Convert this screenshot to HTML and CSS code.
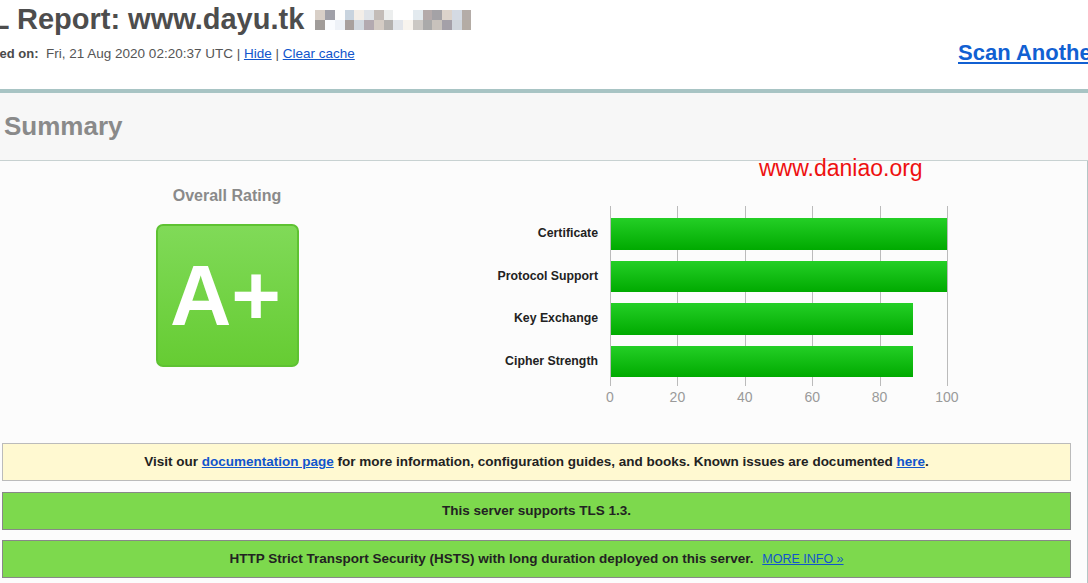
FILE: index.html
```html
<!DOCTYPE html>
<html>
<head>
<meta charset="utf-8">
<link rel="stylesheet" href="styles.css">
</head>
<body>
<div class="report-head">
  <h1 class="title">SSL Report: www.dayu.tk <span class="pix"><span class="pix-grid">
    <i style="background:#d8cfc7"></i><i style="background:#a0a0a8"></i><i style="background:#fdfdfd"></i><i style="background:#c8d3de"></i><i style="background:#f3eee8"></i><i style="background:#dfe3e8"></i><i style="background:#c3bcb8"></i><i style="background:#eceeee"></i><i style="background:#ffffff"></i><i style="background:#ffffff"></i><i style="background:#e3eaef"></i><i style="background:#b4aaaa"></i><i style="background:#a4a2a6"></i><i style="background:#dcd3cb"></i><i style="background:#d4dae3"></i><i style="background:#b4aca8"></i>
    <i style="background:#a09c9a"></i><i style="background:#fafcff"></i><i style="background:#eef2f8"></i><i style="background:#a8a09e"></i><i style="background:#d2d8e0"></i><i style="background:#b3a9b0"></i><i style="background:#d4cbc4"></i><i style="background:#b4b1af"></i><i style="background:#e2e5ea"></i><i style="background:#f8f4ee"></i><i style="background:#cbc8c4"></i><i style="background:#aaaaaa"></i><i style="background:#c8c2bc"></i><i style="background:#a4a0a8"></i><i style="background:#d0d6dc"></i><i style="background:#b4aca4"></i>
  </span></span></h1>
  <div class="meta-row">
    <div class="assessed"><b>Assessed on:</b>&nbsp;&nbsp;Fri, 21 Aug 2020 02:20:37 UTC | <a href="#">Hide</a> | <a href="#">Clear cache</a></div>
    <a class="scan" href="#">Scan Another &raquo;</a>
  </div>
</div>
<div class="rule"></div>
<section class="summary">
  <div class="sum-head">Summary</div>
  <div class="sum-body">
    <div class="watermark">www.daniao.org</div>
    <div class="rating-row">
      <div class="rating">
        <div class="rating-title">Overall Rating</div>
        <div class="grade">A+</div>
      </div>
      <div class="chart">
        <div class="chart-main">
          <div class="labels">
            <div class="label">Certificate</div>
            <div class="label">Protocol Support</div>
            <div class="label">Key Exchange</div>
            <div class="label">Cipher Strength</div>
          </div>
          <div class="plot">
            <div class="gridlines"><span></span><span></span><span></span><span></span><span></span></div>
            <div class="bar" style="width:100%"></div>
            <div class="bar" style="width:100%"></div>
            <div class="bar" style="width:90%"></div>
            <div class="bar" style="width:90%"></div>
          </div>
        </div>
        <div class="axis"><span>0</span><span>20</span><span>40</span><span>60</span><span>80</span><span>100</span></div>
      </div>
    </div>
    <div class="notes">
      <div class="note note-info">Visit our <a href="#">documentation page</a> for more information, configuration guides, and books. Known issues are documented <a href="#">here</a>.</div>
      <div class="note note-good">This server supports TLS 1.3.</div>
      <div class="note note-good">HTTP Strict Transport Security (HSTS) with long duration deployed on this server. <a class="more" href="#">MORE INFO &raquo;</a></div>
    </div>
  </div>
</section>
</body>
</html>
```

FILE: styles.css
```css
html, body {
  margin: 0;
  padding: 0;
}
body {
  width: 1088px;
  height: 583px;
  overflow: hidden;
  background: #ffffff;
  font-family: "Liberation Sans", Arial, sans-serif;
  color: #222;
}
a {
  color: #1155cc;
}

.report-head {
  margin-left: -47px;
  width: 1200px;
  height: 89px;
}
.title {
  margin: 0;
  padding-top: 2px;
  font-size: 29px;
  line-height: 34px;
  font-weight: bold;
  color: #4d4d4d;
  white-space: nowrap;
}
.pix {
  display: inline-block;
  overflow: hidden;
  width: 156px;
  height: 20px;
  margin-left: 3px;
  vertical-align: -1px;
}
.pix-grid {
  display: grid;
  grid-template-columns: repeat(16, 1fr);
  grid-template-rows: 10px 10px;
  width: 156px;
  height: 20px;
}
.pix-grid i {
  display: block;
}
.meta-row {
  display: grid;
  grid-template-columns: 1005px auto;
  align-items: start;
}
.assessed {
  margin-top: 10px;
  padding-left: 1px;
  font-size: 13.5px;
  line-height: 16px;
  color: #555;
  white-space: nowrap;
}
.assessed b {
  font-size: 13px;
  color: #4a4a4a;
}
.scan {
  margin-top: 4px;
  font-size: 22px;
  line-height: 26px;
  font-weight: bold;
  color: #1160d2;
  white-space: nowrap;
}

.rule {
  height: 4px;
  background: #a8c4c4;
}

.summary {
  margin-left: -15px;
  width: 1103px;
}
.sum-head {
  height: 68px;
  box-sizing: border-box;
  padding: 18px 0 0 19px;
  background: #f7f7f7;
  border-bottom: 1px solid #c8d2d2;
  font-size: 26px;
  line-height: 30px;
  font-weight: bold;
  color: #8a8a8a;
}
.sum-body {
  position: relative;
  height: 440px;
  background: #fcfcfc;
  border-left: 1px solid #b4c6c6;
  border-right: 1px solid #b4c6c6;
}
.watermark {
  position: absolute;
  left: 773px;
  top: -6px;
  font-size: 23px;
  line-height: 26px;
  color: #ee1111;
  white-space: nowrap;
}

.rating-row {
  display: flex;
}
.rating {
  width: 482px;
  display: flex;
  flex-direction: column;
  align-items: center;
  padding-top: 25px;
}
.rating-title {
  font-size: 16px;
  line-height: 19px;
  font-weight: bold;
  color: #8a8a8a;
}
.grade {
  margin-top: 19px;
  width: 143px;
  height: 143px;
  box-sizing: border-box;
  border: 2px solid #5ec232;
  border-radius: 7px;
  background: linear-gradient(#80da58, #66cc33);
  display: flex;
  align-items: center;
  justify-content: center;
  font-size: 85px;
  line-height: 1;
  font-weight: bold;
  color: #ffffff;
  padding-right: 3px;
}

.chart {
  margin-top: 45px;
}
.chart-main {
  display: flex;
  gap: 12px;
}
.labels {
  width: 130px;
  display: flex;
  flex-direction: column;
  gap: 11px;
  padding-top: 12px;
  text-align: right;
}
.label {
  height: 31.5px;
  line-height: 31.5px;
  font-size: 12.3px;
  font-weight: bold;
  color: #222;
  white-space: nowrap;
}
.plot {
  position: relative;
  height: 180px;
  box-sizing: border-box;
  width: 338px;
  padding: 12px 1px 0 1px;
  display: flex;
  flex-direction: column;
  gap: 11px;
}
.gridlines {
  position: absolute;
  left: 0;
  right: 0;
  top: 0;
  bottom: 0;
  display: flex;
}
.gridlines span {
  flex: 1;
  border-left: 1px solid #bbbbbb;
}
.gridlines span:last-child {
  border-right: 1px solid #bbbbbb;
}
.bar {
  position: relative;
  height: 31.5px;
  background: linear-gradient(#24cf26, #00aa00);
}
.axis {
  margin-top: 3px;
  margin-left: 122px;
  width: 377px;
  display: flex;
  justify-content: space-between;
  font-size: 14px;
  line-height: 16px;
  color: #9a9a9a;
}
.axis span {
  width: 40px;
  text-align: center;
}

.notes {
  margin: 38px 16px 0 16px;
  display: flex;
  flex-direction: column;
  gap: 10.5px;
}
.note {
  height: 38px;
  box-sizing: border-box;
  text-align: center;
  font-size: 13.5px;
  line-height: 36px;
  font-weight: bold;
  color: #222;
  white-space: nowrap;
}
.note-info {
  background: #fff9d1;
  border: 1px solid #bbbbbb;
}
.note-good {
  background: #7dd94d;
  border: 1px solid #888888;
}
.more {
  margin-left: 5px;
  font-size: 12.5px;
  font-weight: normal;
}
```
